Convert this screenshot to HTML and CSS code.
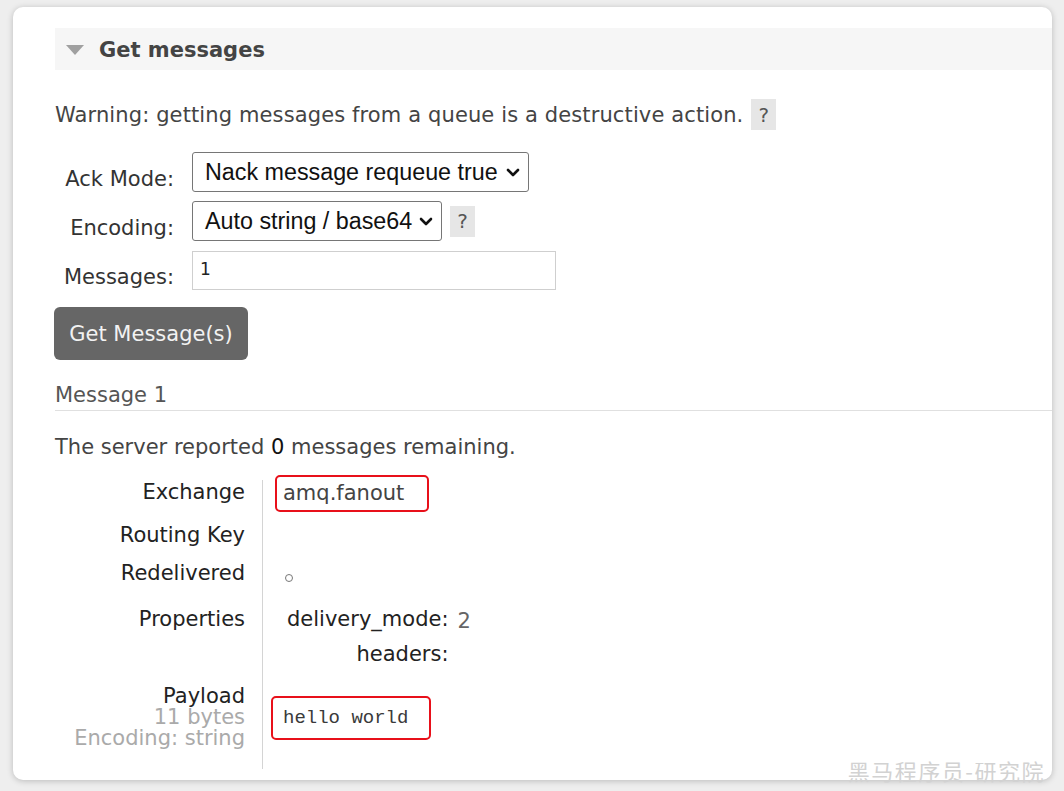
FILE: index.html
```html
<!DOCTYPE html>
<html lang="en">
<head>
<meta charset="utf-8">
<title>Get messages</title>
<link rel="stylesheet" href="styles.css">
</head>
<body>
<div class="card">
  <div class="section-head">
    <svg class="tri" width="18" height="10" viewBox="0 0 18 10"><polygon points="0,0 18,0 9,10" fill="#a0a0a0"/></svg>
    <span class="section-title">Get messages</span>
  </div>

  <div class="warning">
    <span class="warn-text">Warning: getting messages from a queue is a destructive action.</span>
    <span class="help">?</span>
  </div>

  <div class="form">
    <label class="f-label">Ack Mode:</label>
    <div class="f-field">
      <div class="select select-ack"><span>Nack message requeue true</span>
        <svg class="chev" width="14" height="9" viewBox="0 0 14 9"><polyline points="2,2 7,7 12,2" fill="none" stroke="#111" stroke-width="2.6" stroke-linecap="round" stroke-linejoin="round"/></svg>
      </div>
    </div>
    <label class="f-label">Encoding:</label>
    <div class="f-field">
      <div class="select select-enc"><span>Auto string / base64</span>
        <svg class="chev" width="14" height="9" viewBox="0 0 14 9"><polyline points="2,2 7,7 12,2" fill="none" stroke="#111" stroke-width="2.6" stroke-linecap="round" stroke-linejoin="round"/></svg>
      </div>
      <span class="help">?</span>
    </div>
    <label class="f-label">Messages:</label>
    <div class="f-field">
      <div class="input">1</div>
    </div>
  </div>

  <div class="button">Get Message(s)</div>

  <div class="msg-title">Message 1</div>
  <p class="remaining">The server reported <b>0</b> messages remaining.</p>

  <div class="details">
    <div class="d-label r1">Exchange</div>
    <div class="d-value r1"><span class="hl hl-ex">amq.fanout</span></div>

    <div class="d-label r2">Routing Key</div>
    <div class="d-value r2"></div>

    <div class="d-label r3">Redelivered</div>
    <div class="d-value r3"><span class="circle"></span></div>

    <div class="d-label r4">Properties</div>
    <div class="d-value r4">
      <div class="props">
        <span class="p-key">delivery_mode:</span><span class="p-val">2</span>
        <span class="p-key">headers:</span><span class="p-val"></span>
      </div>
    </div>

    <div class="d-label r5">
      <div>Payload</div>
      <div class="sub">11 bytes</div>
      <div class="sub">Encoding: string</div>
    </div>
    <div class="d-value r5"><span class="hl hl-pay">hello world</span></div>
  </div>
</div>
<div class="watermark">黑马程序员-研究院</div>
</body>
</html>
```

FILE: styles.css
```css
html, body {
  margin: 0;
  padding: 0;
}
body {
  background: #eeeeee;
  font-family: "DejaVu Sans", Verdana, sans-serif;
  font-size: 21px;
  color: #444;
  width: 1064px;
  height: 791px;
  overflow: hidden;
  position: relative;
}
.card {
  margin: 7px 12px 0 13px;
  height: 773px;
  box-sizing: border-box;
  background: #fff;
  border-radius: 10px;
  box-shadow: 0 1px 6px rgba(0, 0, 0, 0.22);
  padding: 21px 0 0 42px;
  overflow: hidden;
}
.section-head {
  height: 42px;
  background: #f6f6f6;
  display: flex;
  align-items: center;
  padding-left: 11px;
}
.tri {
  display: block;
  margin-top: 2px;
}
.section-title {
  font-weight: bold;
  margin-left: 15px;
  color: #444;
  font-size: 21px;
  padding-top: 2px;
}
.warning {
  margin-top: 29px;
  height: 31px;
  display: flex;
  align-items: center;
  line-height: 24px;
}
.warn-text {
  letter-spacing: 0.12px;
}
.help {
  display: inline-flex;
  align-items: center;
  justify-content: center;
  width: 25px;
  height: 31px;
  background: #e6e6e6;
  color: #555;
  margin-left: 8px;
  font-size: 20px;
}
.form {
  margin-top: 22px;
  display: grid;
  grid-template-columns: 119px auto;
  column-gap: 18px;
  row-gap: 9px;
  justify-content: start;
}
.f-label {
  text-align: right;
  line-height: 24px;
  padding-top: 15px;
  color: #333;
  white-space: nowrap;
}
.f-field {
  display: flex;
  align-items: center;
}
.select {
  height: 40px;
  box-sizing: border-box;
  border: 1px solid #767676;
  border-radius: 3px;
  background: #fff;
  display: flex;
  align-items: center;
  justify-content: space-between;
  padding: 0 8px 0 12px;
  font-family: "Liberation Sans", Arial, sans-serif;
  font-size: 23.3px;
  color: #111;
  white-space: nowrap;
}
.select-ack {
  width: 337px;
}
.select-enc {
  width: 250px;
}
.chev {
  display: block;
  flex: none;
}
.f-field .help {
  margin-left: 8px;
}
.input {
  width: 364px;
  height: 39px;
  box-sizing: border-box;
  border: 1px solid #cfcfcf;
  padding: 6px 0 0 7px;
  font-size: 17px;
  line-height: 22px;
  color: #222;
  margin-top: 1px;
}
.button {
  margin-top: 17px;
  margin-left: -1px;
  width: 194px;
  height: 53px;
  box-sizing: border-box;
  background: #666;
  border-radius: 6px;
  color: #f2f2f2;
  display: flex;
  align-items: center;
  justify-content: center;
  font-size: 21px;
}
.msg-title {
  margin-top: 24px;
  line-height: 22px;
  padding-bottom: 4px;
  border-bottom: 1px solid #e0e0e0;
  color: #555;
}
.remaining {
  margin: 25px 0 0 0;
  line-height: 22px;
  color: #444;
}
.remaining b {
  font-weight: normal;
  color: #111;
}
.details {
  margin-top: 22px;
  display: grid;
  grid-template-columns: 190px 1fr;
  column-gap: 17px;
  line-height: 21px;
}
.d-label {
  text-align: right;
  color: #222;
  white-space: nowrap;
}
.d-value {
  border-left: 1px solid #d4d4d4;
}
.r1 {
  padding-top: 2px;
  padding-bottom: 11px;
}
.r2 {
  padding-top: 11px;
  padding-bottom: 8px;
  min-height: 21px;
}
.r3 {
  padding-top: 9px;
  padding-bottom: 14px;
}
.r4 {
  padding-top: 11px;
  padding-bottom: 21px;
}
.r5 {
  padding-top: 10px;
  padding-bottom: 20px;
}
.d-value.r1, .d-value.r3, .d-value.r4, .d-value.r5 {
  padding-top: 0;
  padding-bottom: 0;
}
.d-value.r2 {
  padding-top: 0;
  padding-bottom: 0;
}
.hl {
  display: inline-block;
  box-sizing: border-box;
  border: 2px solid #e8101a;
  border-radius: 5px;
  background: #fff;
}
.hl-ex {
  margin: -5px 0 0 12px;
  width: 154px;
  height: 37px;
  padding-left: 6px;
  line-height: 33px;
  color: #444;
}
.circle {
  display: block;
  width: 8px;
  height: 8px;
  box-sizing: border-box;
  border: 1.4px solid #777;
  border-radius: 50%;
  margin: 20px 0 0 22px;
}
.props {
  display: grid;
  grid-template-columns: auto auto;
  column-gap: 9px;
  row-gap: 14px;
  margin: 11px 0 11px 24px;
  justify-content: start;
}
.p-key {
  text-align: right;
  color: #222;
  white-space: nowrap;
}
.p-val {
  color: #666;
  position: relative;
  top: 2px;
}
.sub {
  color: #aaa;
}
.hl-pay {
  margin: 20px 0 0 8px;
  width: 160px;
  height: 44px;
  padding-left: 10px;
  line-height: 40px;
  font-family: "Liberation Mono", "DejaVu Sans Mono", monospace;
  font-size: 19px;
  color: #3a3a3a;
}
.watermark {
  position: absolute;
  right: 19px;
  bottom: 8px;
  font-family: "Noto Sans CJK SC", sans-serif;
  font-size: 22px;
  line-height: 26px;
  color: #d2d2d2;
  letter-spacing: 1.5px;
}
```
